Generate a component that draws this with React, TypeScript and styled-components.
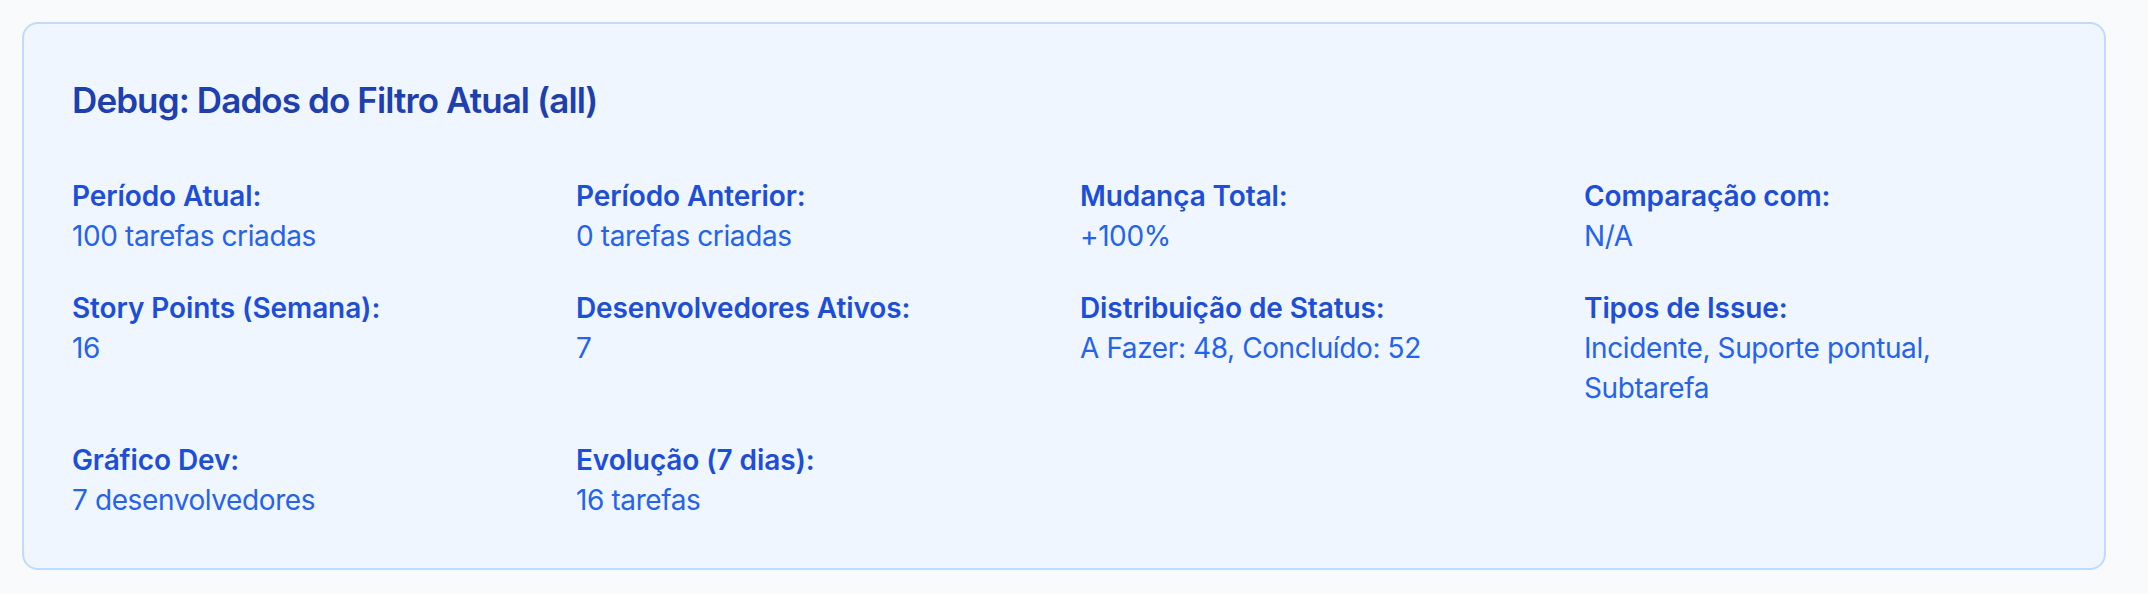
import React from "react";
import styled, { createGlobalStyle } from "styled-components";

const GlobalStyle = createGlobalStyle`
  html, body {
    margin: 0;
    padding: 0;
    background: #f8fafc;
  }
  body {
    font-family: Inter, "Noto Sans", sans-serif;
    -webkit-font-smoothing: antialiased;
  }
  * { box-sizing: border-box; }
`;

const Page = styled.div`
  padding: 22px 42px 24px 22px;
  background: #f8fafc;
`;

const Card = styled.section`
  background: #eff6ff;
  border: 2px solid #bfdbfe;
  border-radius: 16px;
  padding: 48px;
`;

const Title = styled.h3`
  margin: 0 0 48px 0;
  font-size: 35px;
  line-height: 56px;
  font-weight: 600;
  color: #1e40af;
  letter-spacing: -0.9px;
`;

const Grid = styled.div`
  display: grid;
  grid-template-columns: repeat(4, minmax(0, 1fr));
  gap: 32px;
`;

const Item = styled.div`
  display: flex;
  flex-direction: column;
`;

const Label = styled.div`
  font-size: 28px;
  line-height: 40px;
  font-weight: 600;
  color: #1d4ed8;
  letter-spacing: -0.1px;
`;

const Value = styled.div`
  font-size: 28px;
  line-height: 40px;
  font-weight: 400;
  color: #2563eb;
  letter-spacing: -0.4px;
`;

const items: { label: string; value: string }[] = [
  { label: "Período Atual:", value: "100 tarefas criadas" },
  { label: "Período Anterior:", value: "0 tarefas criadas" },
  { label: "Mudança Total:", value: "+100%" },
  { label: "Comparação com:", value: "N/A" },
  { label: "Story Points (Semana):", value: "16" },
  { label: "Desenvolvedores Ativos:", value: "7" },
  { label: "Distribuição de Status:", value: "A Fazer: 48, Concluído: 52" },
  { label: "Tipos de Issue:", value: "Incidente, Suporte pontual, Subtarefa" },
  { label: "Gráfico Dev:", value: "7 desenvolvedores" },
  { label: "Evolução (7 dias):", value: "16 tarefas" },
];

export default function App() {
  return (
    <>
      <GlobalStyle />
      <Page>
        <Card>
          <Title>Debug: Dados do Filtro Atual (all)</Title>
          <Grid>
            {items.map((it) => (
              <Item key={it.label}>
                <Label>{it.label}</Label>
                <Value>{it.value}</Value>
              </Item>
            ))}
          </Grid>
        </Card>
      </Page>
    </>
  );
}
